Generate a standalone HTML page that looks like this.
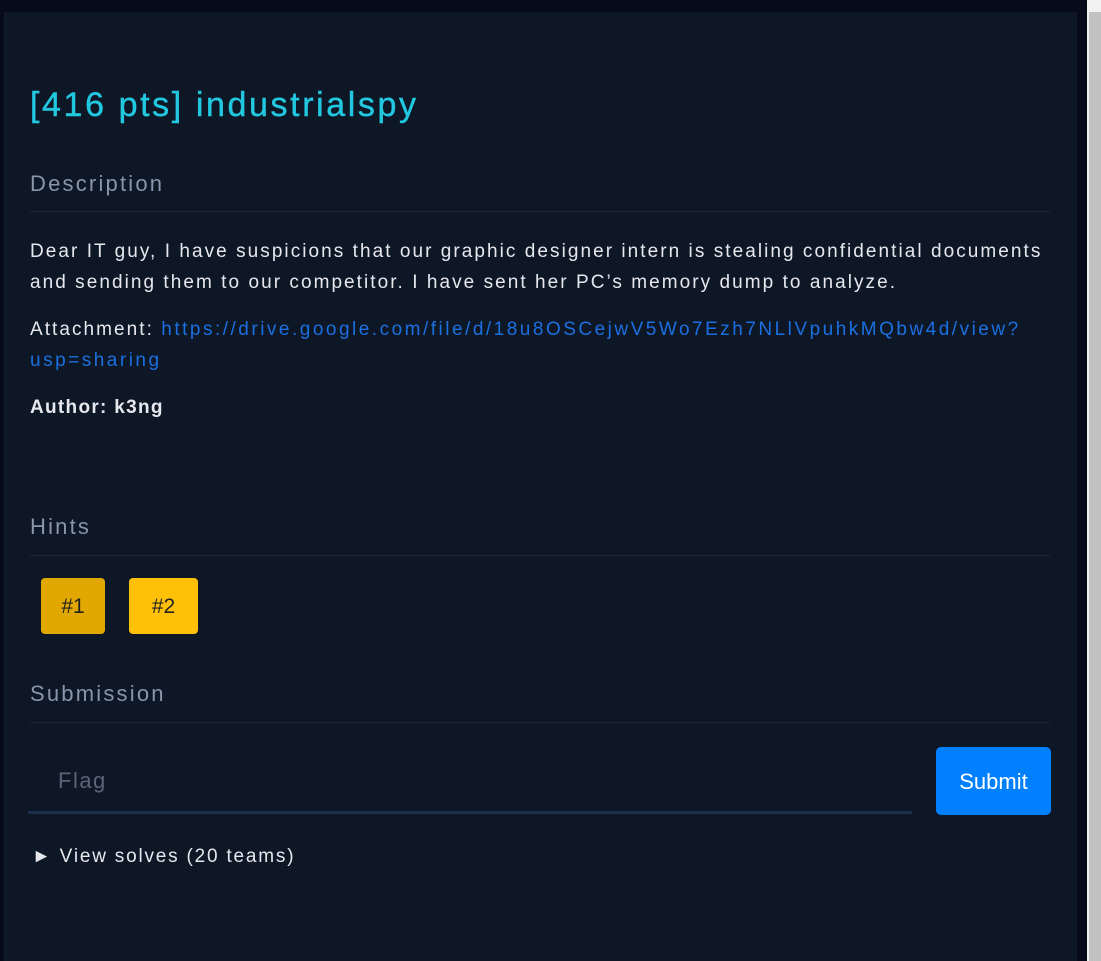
<!DOCTYPE html>
<html><head><style>
body{margin:0;width:1101px;height:961px;background:#060a19;position:relative;overflow:hidden;font-family:"Liberation Sans",sans-serif;}
.sb{position:absolute;left:1087px;top:0;width:14px;height:961px;background:#f1f1f1}
.sb div{position:absolute;left:2px;top:12px;width:12px;height:949px;background:#c1c1c1}
.p{position:absolute;left:4px;top:12px;width:1072px;height:949px;background:#0e1726;border-left:1px solid #141c30}
.t{position:absolute;left:30px;top:86px;font-size:34px;color:#22c8e0;letter-spacing:2.6px;white-space:nowrap;-webkit-text-stroke:0.4px #22c8e0}
.h{position:absolute;left:30px;font-size:22px;color:#8a94aa;letter-spacing:2.2px}
.hr{position:absolute;left:30px;width:1020px;height:1px;background:#1b2536}
.tx{position:absolute;left:30px;font-size:19px;color:#e6e8ee;line-height:31px;width:1040px;letter-spacing:2.05px}
a{color:#1b6fe0;text-decoration:none;letter-spacing:2.5px}
.b{position:absolute;top:578px;height:56px;border-radius:4px;font-size:21px;color:#222;text-align:center;line-height:58px}
</style></head><body>
<div class="sb"><div></div></div>
<div class="p"></div>
<div class="t">[416 pts] industrialspy</div>
<div class="h" style="top:171px">Description</div>
<div class="hr" style="top:211px"></div>
<div class="tx" style="top:236px">Dear IT guy, I have suspicions that our graphic designer intern is stealing confidential documents and sending them to our competitor. I have sent her PC’s memory dump to analyze.</div>
<div class="tx" style="top:314px">Attachment: <a>https://drive.google.com/file/d/18u8OSCejwV5Wo7Ezh7NLlVpuhkMQbw4d/view?<br>usp=sharing</a></div>
<div class="tx" style="top:392px;font-weight:bold;letter-spacing:1.3px">Author: k3ng</div>
<div class="h" style="top:514px">Hints</div>
<div class="hr" style="top:555px"></div>
<div class="b" style="left:41px;width:64px;background:#e0a800">#1</div>
<div class="b" style="left:129px;width:69px;background:#ffc107">#2</div>
<div class="h" style="top:681px">Submission</div>
<div class="hr" style="top:722px"></div>
<div style="position:absolute;left:58px;top:768px;font-size:22px;color:#5c6577;letter-spacing:1.5px">Flag</div>
<div style="position:absolute;left:28px;top:811px;width:884px;height:3px;background:#1b2e4b"></div>
<div style="position:absolute;left:936px;top:747px;width:115px;height:68px;background:#0080ff;border-radius:5px;color:#fff;font-size:22px;text-align:center;line-height:70px">Submit</div>
<div class="tx" style="top:841px;left:32px;letter-spacing:1.8px">► View solves (20 teams)</div>
</body></html>
